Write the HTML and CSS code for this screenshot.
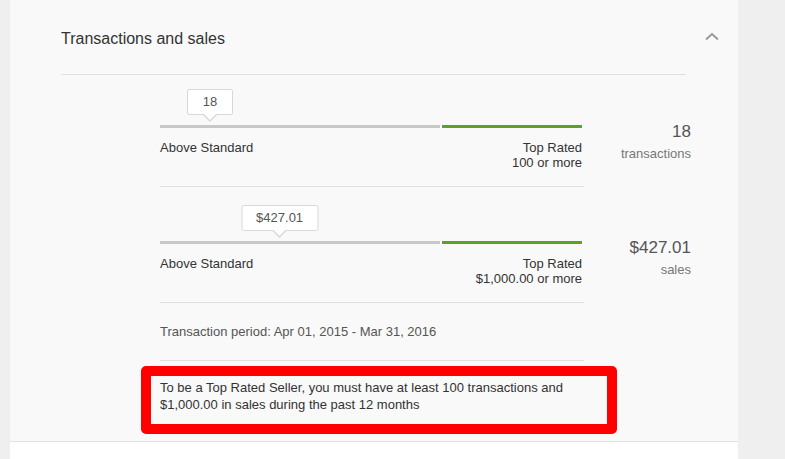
FILE: index.html
```html
<!DOCTYPE html>
<html>
<head>
<meta charset="utf-8">
<link rel="stylesheet" href="styles.css">
</head>
<body>
<div class="page">
  <section class="card">
    <div class="header">
      <h2 class="title">Transactions and sales</h2>
      <svg class="chevron" width="16" height="10" viewBox="0 0 16 10"><polyline points="2,8.5 8,3 14,8.5" fill="none" stroke="#9a9a9a" stroke-width="2"/></svg>
    </div>
    <div class="rule"></div>
    <div class="content">
      <div class="metric first">
        <div class="scale">
          <div class="tip-track"><span class="tip" style="margin-left:50px">18</span></div>
          <div class="bar"><span class="bar-std"></span><span class="bar-top"></span></div>
          <div class="labels">
            <div class="lbl-left">Above Standard</div>
            <div class="lbl-right">Top Rated<br>100 or more</div>
          </div>
        </div>
        <div class="total">
          <div class="total-num">18</div>
          <div class="total-unit">transactions</div>
        </div>
      </div>
      <div class="metric">
        <div class="scale">
          <div class="tip-track"><span class="tip" style="margin-left:119.6px">$427.01</span></div>
          <div class="bar"><span class="bar-std"></span><span class="bar-top"></span></div>
          <div class="labels">
            <div class="lbl-left">Above Standard</div>
            <div class="lbl-right">Top Rated<br>$1,000.00 or more</div>
          </div>
        </div>
        <div class="total">
          <div class="total-num">$427.01</div>
          <div class="total-unit">sales</div>
        </div>
      </div>
      <div class="period">Transaction period: Apr 01, 2015 - Mar 31, 2016</div>
      <div class="note">To be a Top Rated Seller, you must have at least 100 transactions and $1,000.00 in sales during the past 12 months</div>
    </div>
  </section>
  <section class="next-card"></section>
</div>
</body>
</html>
```
FILE: styles.css
```css
html, body {
  margin: 0;
  padding: 0;
}
body {
  background: #efefef;
  font-family: "Liberation Sans", Arial, sans-serif;
  color: #333;
  width: 785px;
  height: 459px;
  overflow: hidden;
}
.page {
  padding-left: 10px;
  width: 728px;
}
.card {
  background: #f9f9f9;
  border-bottom: 1px solid #e2e2e2;
  padding-bottom: 7px;
}
.header {
  height: 74px;
  display: flex;
  align-items: center;
  justify-content: space-between;
  padding: 0 18px 0 51px;
}
.title {
  margin: 0;
  font-weight: normal;
  font-size: 16px;
  line-height: 20px;
  color: #333;
  position: relative;
  top: 2px;
}
.chevron {
  display: block;
  margin-top: -2px;
}
.rule {
  height: 1px;
  background: #e0e0e0;
  margin: 0 52px 0 51px;
}
.content {
  margin-left: 150px;
  width: 531px;
}
.metric {
  display: flex;
  padding-top: 18px;
}
.metric.first {
  padding-top: 14px;
}
.scale {
  width: 424px;
  border-bottom: 1px solid #e0e0e0;
  padding-bottom: 16px;
}
.tip-track {
  height: 32px;
}
.tip {
  display: inline-block;
  transform: translateX(-50%);
  position: relative;
  min-width: 46px;
  box-sizing: border-box;
  height: 26px;
  line-height: 24px;
  padding: 0 14px;
  text-align: center;
  background: #fff;
  border: 1px solid #d8d8d8;
  border-radius: 2px;
  font-size: 13px;
  color: #555;
}
.tip::before,
.tip::after {
  content: "";
  position: absolute;
  left: 50%;
  width: 0;
  height: 0;
  border-style: solid;
  border-color: transparent;
}
.tip::before {
  top: 25px;
  margin-left: -7px;
  border-width: 7px 7px 0 7px;
  border-top-color: #d8d8d8;
}
.tip::after {
  top: 24px;
  margin-left: -6px;
  border-width: 6px 6px 0 6px;
  border-top-color: #fff;
}
.bar {
  display: flex;
  gap: 2px;
  height: 3px;
  margin-top: 4px;
  width: 422px;
}
.bar-std {
  width: 280px;
  background: #c8c8c8;
}
.bar-top {
  width: 140px;
  background: #5ba321;
}
.labels {
  display: flex;
  justify-content: space-between;
  width: 422px;
  margin-top: 12px;
  font-size: 13px;
  line-height: 15px;
  color: #333;
}
.lbl-right {
  text-align: right;
}
.total {
  width: 107px;
  text-align: right;
  padding-top: 32px;
}
.total-num {
  font-size: 17px;
  line-height: 22px;
  color: #555;
}
.total-unit {
  font-size: 13px;
  line-height: 22px;
  color: #777;
}
.period {
  width: 424px;
  font-size: 13px;
  line-height: 16px;
  color: #555;
  padding: 21px 0 20px;
  border-bottom: 1px solid #e0e0e0;
}
.note {
  margin: 5px 0 0 -19px;
  width: 476px;
  box-sizing: border-box;
  border: 10px solid #ff0000;
  border-radius: 5px;
  padding: 3px 9px 11px;
  font-size: 13px;
  line-height: 17px;
  color: #333;
}
.next-card {
  background: #fff;
  height: 18px;
}
```
